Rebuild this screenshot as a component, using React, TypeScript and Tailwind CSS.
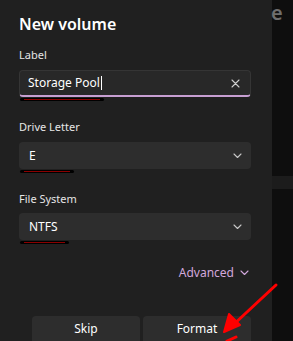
import React from 'react';

const font = { fontFamily: '"Noto Sans", "Open Sans", sans-serif' };

const Chevron = ({ color = '#c8c8c8' }: { color?: string }) => (
  <svg width="9" height="6" viewBox="0 0 9 6" fill="none">
    <path d="M1 1l3.5 3.5L8 1" stroke={color} strokeWidth="1.1" strokeLinecap="round" strokeLinejoin="round" />
  </svg>
);

const Mark = ({ w }: { w: number }) => (
  <div className="absolute left-[1px] -bottom-[4px] h-[3px] rounded-full bg-black" style={{ width: w }}>
    <div className="mx-[4px] mt-[1px] h-[1px] bg-[#8b0000]" />
  </div>
);

const Select = ({ value, mark }: { value: string; mark: number }) => (
  <div className="relative">
    <div className="flex h-[27px] items-center justify-between rounded-[4px] bg-[#2d2d2d] pl-[10px] pr-[9px]">
      <span className="text-[12px] leading-[16px] text-white">{value}</span>
      <Chevron />
    </div>
    <Mark w={mark} />
  </div>
);

export default function App() {
  return (
    <div className="relative flex h-[341px] w-[293px] overflow-hidden bg-[#0e0e0e]" style={font}>
      <div className="flex w-[272px] flex-col bg-[#202020] pl-[19px] pr-[21px]">
        <h1 className="mt-[12px] text-[16px] font-semibold leading-[24px] text-white">New volume</h1>

        <label className="mt-[11px] text-[11px] leading-[16px] text-[#e6e6e6]">Label</label>
        <div className="relative mt-[7px]">
          <div className="flex h-[27px] items-center justify-between rounded-[4px] border border-[#353535] border-b-2 border-b-[#c79fd2] bg-[#282828] pl-[8px] pr-[10px]">
            <span className="flex items-center text-[12px] leading-[16px] text-white">
              Storage Pool<span className="ml-[1px] inline-block h-[14px] w-[1px] bg-white" />
            </span>
            <svg width="9" height="9" viewBox="0 0 9 9">
              <path d="M1 1l7 7M8 1l-7 7" stroke="#cfcfcf" strokeWidth="1.1" strokeLinecap="round" />
            </svg>
          </div>
          <Mark w={84} />
        </div>

        <label className="mt-[22px] text-[11px] leading-[16px] text-[#e6e6e6]">Drive Letter</label>
        <div className="mt-[7px]">
          <Select value="E" mark={54} />
        </div>

        <label className="mt-[22px] text-[11px] leading-[16px] text-[#e6e6e6]">File System</label>
        <div className="mt-[6px]">
          <Select value="NTFS" mark={49} />
        </div>

        <div className="mt-[25px] flex items-center justify-end gap-[6px] pr-[2px] text-[12px] leading-[16px] text-[#d2a8dc]">
          Advanced
          <Chevron color="#d2a8dc" />
        </div>

        <div className="mt-[35px] flex gap-[3px] pl-[13px]">
          <button className="h-[30px] flex-1 rounded-t-[4px] bg-[#2d2d2d] pb-[4px] text-[12px] text-white">Skip</button>
          <button className="h-[30px] flex-1 rounded-t-[4px] bg-[#2d2d2d] pb-[4px] text-[12px] text-white">Format</button>
        </div>
      </div>

      <div className="flex flex-1 flex-col">
        <div className="mt-[1px] -ml-[1px] text-[20px] font-semibold leading-[24px] text-[#6e6e6e]">e</div>
        <div className="mt-[151px] h-[13px] bg-[#1c1c1c]" />
      </div>

      <svg className="pointer-events-none absolute left-0 top-0" width="293" height="341" viewBox="0 0 293 341">
        <path d="M276 285 L232 326" stroke="#ff0000" strokeWidth="3" strokeLinecap="round" />
        <path d="M224 332 L229 314 L240 325 Z" fill="#ff0000" stroke="#ff0000" strokeWidth="2" strokeLinejoin="round" />
        <path d="M227 341 L236 337" stroke="#ff0000" strokeWidth="3" strokeLinecap="round" />
      </svg>
    </div>
  );
}
